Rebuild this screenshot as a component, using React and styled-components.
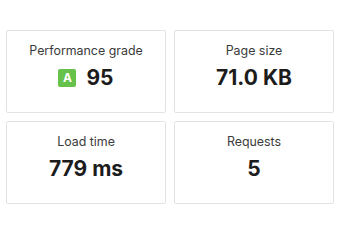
import React from "react";
import styled, { createGlobalStyle } from "styled-components";

const GlobalStyle = createGlobalStyle`
  body {
    margin: 0;
    background: #ffffff;
    font-family: Inter, "Liberation Sans", sans-serif;
  }
`;

const Grid = styled.div`
  display: grid;
  grid-template-columns: 1fr 1fr;
  gap: 8px;
  padding: 30px 6px 0 6px;
`;

const Card = styled.div`
  height: 83px;
  box-sizing: border-box;
  padding: 12px 10px 0;
  border: 1px solid #e3e3e3;
  border-radius: 2px;
  background: #fff;
  display: flex;
  flex-direction: column;
  align-items: center;
`;

const Label = styled.div`
  font-size: 12.4px;
  line-height: 16px;
  color: #3a3a3a;
`;

const Value = styled.div`
  margin-top: 6px;
  display: flex;
  align-items: center;
  gap: 10px;
  font-size: 21px;
  line-height: 26px;
  font-weight: 700;
  color: #1c1c1c;
`;

const Badge = styled.span`
  width: 18px;
  height: 18px;
  border-radius: 2px;
  background: ${(p) => p.color};
  color: #fff;
  font-size: 12px;
  line-height: 18px;
  font-weight: 700;
  text-align: center;
`;

const metrics = [
  { label: "Performance grade", value: "95", grade: "A" },
  { label: "Page size", value: "71.0 KB" },
  { label: "Load time", value: "779 ms" },
  { label: "Requests", value: "5" },
];

export default function App() {
  return (
    <>
      <GlobalStyle />
      <Grid>
        {metrics.map((m) => (
          <Card key={m.label}>
            <Label>{m.label}</Label>
            <Value>
              {m.grade && <Badge color="#66c24a">{m.grade}</Badge>}
              {m.value}
            </Value>
          </Card>
        ))}
      </Grid>
    </>
  );
}
